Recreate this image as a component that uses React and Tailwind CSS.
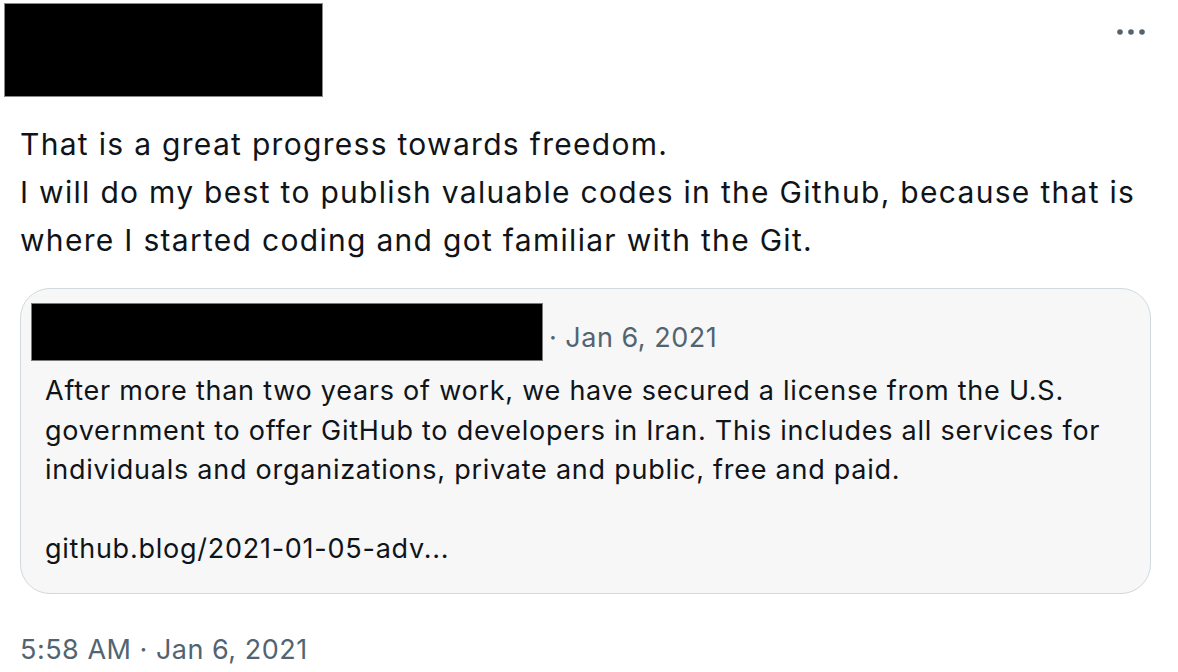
const font = { fontFamily: "Inter, 'Noto Sans', sans-serif" };

const MoreDots = () => (
    <svg width="30" height="8" viewBox="0 0 30 8" className="mr-[32px] mt-[28px]">
        <circle cx="4" cy="4" r="2.8" fill="#536471" />
        <circle cx="15" cy="4" r="2.8" fill="#536471" />
        <circle cx="26" cy="4" r="2.8" fill="#536471" />
    </svg>
)

const QuotedTweet = () => (
    <div className="mx-[20px] mt-[24px] w-[1131px] h-[306px] rounded-[30px] border border-[#cfd9de] bg-[#f7f7f7]">
        <div className="flex items-center pl-[10px] pt-[14px]">
            <div className="w-[512px] h-[58px] bg-black border border-[#7a7a7a]" />
            <span className="ml-[6px] pt-[12px] text-[27px] tracking-[0.5px] leading-[36px] text-[#536471]">· Jan 6, 2021</span>
        </div>
        <div className="pl-[24px] pt-[10px] text-[27px] tracking-[0.75px] leading-[39.5px] text-[#0f1419]">
            <div className="whitespace-nowrap">After more than two years of work, we have secured a license from the U.S.</div>
            <div className="whitespace-nowrap">government to offer GitHub to developers in Iran. This includes all services for</div>
            <div className="whitespace-nowrap">individuals and organizations, private and public, free and paid.</div>
            <div className="h-[39.5px]" />
            <div className="whitespace-nowrap">github.blog/2021-01-05-adv...</div>
        </div>
    </div>
)

export default function App() {
    return (
        <div className="w-[1178px] h-[672px] bg-white overflow-hidden" style={font}>
            <div className="flex justify-between items-start">
                <div className="ml-[4px] mt-[3px] w-[319px] h-[94px] bg-black border border-[#8a8a8a]" />
                <MoreDots />
            </div>

            <div className="px-[20px] mt-[23px] text-[30px] tracking-[1.3px] leading-[48px] text-[#0f1419]">
                <div className="whitespace-nowrap">That is a great progress towards freedom.</div>
                <div className="whitespace-nowrap">I will do my best to publish valuable codes in the Github, because that is</div>
                <div className="whitespace-nowrap">where I started coding and got familiar with the Git.</div>
            </div>

            <QuotedTweet />

            <div className="px-[20px] mt-[32px] text-[27px] tracking-[0.5px] leading-[48px] text-[#536471] whitespace-nowrap">
                5:58 AM · Jan 6, 2021
            </div>
        </div>
    )
}
